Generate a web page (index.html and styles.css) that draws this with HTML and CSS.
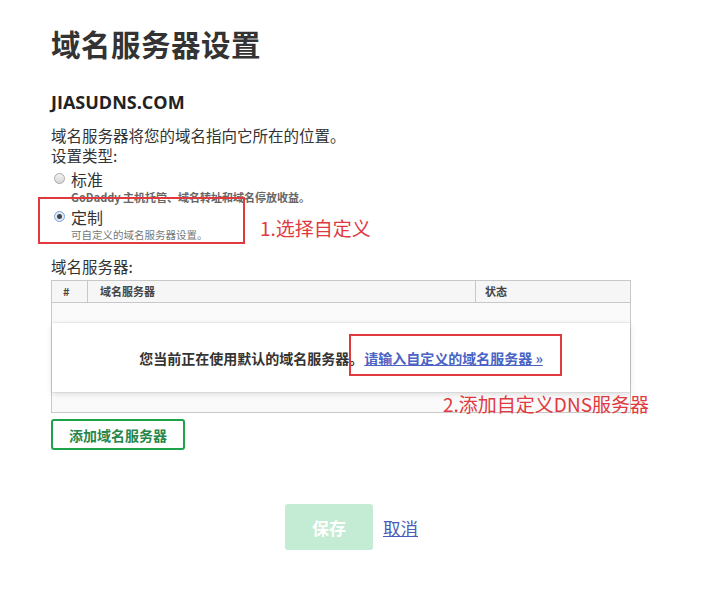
FILE: index.html
```html
<!DOCTYPE html>
<html lang="zh-CN">
<head>
    <meta charset="UTF-8">
    <title>域名服务器设置</title>
    <link rel="stylesheet" href="styles.css">
</head>
<body>
    <div class="page">
        <h1 class="title">域名服务器设置</h1>
        <h2 class="domain">JIASUDNS.COM</h2>
        <p class="desc">域名服务器将您的域名指向它所在的位置。</p>
        <p class="label">设置类型:</p>

        <div class="options">
            <div class="option">
                <span class="radio"></span>
                <div class="option-text">
                    <div class="option-name">标准</div>
                    <div class="option-sub bold">GoDaddy 主机托管、域名转址和域名停放收益。</div>
                </div>
            </div>
            <div class="option">
                <span class="radio checked"></span>
                <div class="option-text">
                    <div class="option-name">定制</div>
                    <div class="option-sub">可自定义的域名服务器设置。</div>
                </div>
            </div>
            <div class="mark mark-1"></div>
            <div class="note note-1">1.选择自定义</div>
        </div>

        <p class="label ns-label">域名服务器:</p>
        <div class="ns-wrap">
            <div class="ns-table">
                <div class="ns-head">
                    <div class="col-num">#</div>
                    <div class="col-name">域名服务器</div>
                    <div class="col-status">状态</div>
                </div>
                <div class="ns-gap"></div>
                <div class="ns-panel">
                    您当前正在使用默认的域名服务器。<a href="#" class="ns-link">请输入自定义的域名服务器 »</a>
                </div>
                <div class="ns-gap bottom"></div>
            </div>
            <div class="mark mark-2"></div>
            <div class="note note-2">2.添加自定义DNS服务器</div>
        </div>

        <button class="add-button">添加域名服务器</button>

        <div class="actions">
            <button class="save-button">保存</button>
            <a href="#" class="cancel-link">取消</a>
        </div>
    </div>
</body>
</html>
```

FILE: styles.css
```css
body {
    margin: 0;
    background-color: #ffffff;
    font-family: "Microsoft YaHei", "Noto Sans CJK SC", "Open Sans", sans-serif;
    color: #333;
}

.page {
    padding: 21px 0 0 51px;
    width: 580px;
}

.title {
    margin: 0;
    font-size: 29.5px;
    line-height: 44px;
    font-weight: bold;
    color: #333;
    letter-spacing: 0.5px;
}

.domain {
    margin: 26px 0 0;
    font-family: "Open Sans", "Noto Sans", sans-serif;
    font-size: 18px;
    line-height: 22px;
    font-weight: bold;
    color: #222;
}

.desc,
.label {
    margin: 0;
    font-size: 15.5px;
    line-height: 20px;
    color: #333;
}

.desc {
    margin-top: 12px;
}

.options {
    position: relative;
    margin-top: 3px;
}

.option {
    display: flex;
    align-items: flex-start;
    padding-left: 3px;
}

.option + .option {
    margin-top: 2px;
}

.radio {
    width: 11px;
    height: 11px;
    margin-top: 5px;
    margin-right: 6px;
    border: 1px solid #a8a8a8;
    border-radius: 50%;
    background: linear-gradient(#f4f4f4, #d6d6d6);
    box-sizing: border-box;
    position: relative;
}

.radio.checked {
    border-color: #7fa3d6;
    background: #dfe9f7;
}

.radio.checked::after {
    content: "";
    position: absolute;
    left: 2px;
    top: 2px;
    width: 5px;
    height: 5px;
    border-radius: 50%;
    background: #444;
}

.option-name {
    font-size: 16px;
    line-height: 22px;
    color: #333;
}

.option-sub {
    font-size: 10.5px;
    line-height: 14px;
    color: #777;
}

.option-sub.bold {
    font-size: 11px;
    font-weight: bold;
    color: #666;
}

.mark {
    position: absolute;
    border: 2px solid #e0393e;
}

.mark-1 {
    left: -13px;
    top: 29px;
    width: 203px;
    height: 43px;
}

.note {
    position: absolute;
    color: #e0393e;
    font-size: 19px;
    line-height: 24px;
    white-space: nowrap;
}

.note-1 {
    left: 209px;
    top: 48px;
}

.ns-label {
    margin-top: 14px;
}

.ns-wrap {
    position: relative;
    margin-top: 4px;
}

.ns-table {
    border: 1px solid #c8c8c8;
    width: 578px;
}

.ns-head {
    display: flex;
    background-color: #f6f6f6;
    border-bottom: 1px solid #c8c8c8;
    font-size: 11px;
    font-weight: bold;
    line-height: 21px;
    color: #444;
}

.col-num {
    width: 36px;
    padding-left: 11px;
    box-sizing: border-box;
    border-right: 1px solid #c8c8c8;
}

.col-name {
    width: 388px;
    padding-left: 12px;
    box-sizing: border-box;
    border-right: 1px solid #c8c8c8;
}

.col-status {
    flex: 1;
    padding-left: 9px;
}

.ns-gap {
    height: 19px;
    background-color: #fafafa;
    border-bottom: 1px solid #ededed;
}

.ns-gap.bottom {
    height: 19px;
    border-bottom: none;
    border-top: 1px solid #ededed;
}

.ns-panel {
    height: 69px;
    display: flex;
    align-items: center;
    justify-content: center;
    font-size: 14px;
    font-weight: bold;
    color: #333;
    background-color: #ffffff;
    box-shadow: 0 2px 6px rgba(0, 0, 0, 0.12);
    position: relative;
}

.ns-link {
    margin-left: 1px;
    color: #4a63c4;
    text-decoration: underline;
}

.mark-2 {
    left: 298px;
    top: 54px;
    width: 209px;
    height: 38px;
}

.note-2 {
    left: 392px;
    top: 112px;
}

.add-button {
    display: block;
    margin-top: 6px;
    width: 134px;
    height: 31px;
    border: 2px solid #1fa34a;
    border-radius: 3px;
    background-color: #ffffff;
    color: #27874a;
    font-family: inherit;
    font-size: 14px;
    font-weight: bold;
    padding: 0;
}

.actions {
    display: flex;
    align-items: center;
    margin-top: 54px;
    padding-left: 234px;
}

.save-button {
    width: 88px;
    height: 46px;
    border: none;
    border-radius: 3px;
    background-color: #c4ebd4;
    color: #ffffff;
    font-family: inherit;
    font-size: 17px;
    font-weight: bold;
    padding: 0;
}

.cancel-link {
    margin-left: 10px;
    color: #4a5cb8;
    font-size: 17.5px;
    text-decoration: underline;
}
```
